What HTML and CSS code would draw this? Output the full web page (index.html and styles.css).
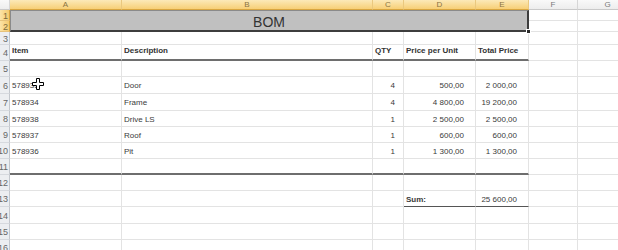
FILE: index.html
```html
<!DOCTYPE html>
<html lang="en">

<head>
  <meta charset="UTF-8">
  <meta name="viewport" content="width=device-width, initial-scale=1.0">
  <title>BOM</title>
  <link rel="stylesheet" href="styles.css">
</head>

<body>
  <main class="sheet">
    <!-- column headers -->
    <div class="col corner"></div>
    <div class="col sel">A</div>
    <div class="col sel">B</div>
    <div class="col sel">C</div>
    <div class="col sel">D</div>
    <div class="col sel">E</div>
    <div class="col">F</div>
    <div class="col">G</div>

    <!-- rows 1-2: merged title -->
    <div class="bom">BOM<span class="handle"></span></div>
    <div class="row sel">1</div><div></div><div></div>
    <div class="row sel">2</div><div></div><div></div>

    <div class="row">3</div><div></div><div></div><div></div><div></div><div></div><div></div><div></div>

    <div class="row">4</div>
    <div class="head">Item</div>
    <div class="head">Description</div>
    <div class="head">QTY</div>
    <div class="head">Price per Unit</div>
    <div class="head">Total Price</div>
    <div></div><div></div>

    <div class="row">5</div><div></div><div></div><div></div><div></div><div></div><div></div><div></div>

    <div class="row">6</div><div>578935</div><div>Door</div><div class="qty">4</div><div class="num">500,00</div><div class="num">2 000,00</div><div></div><div></div>
    <div class="row">7</div><div>578934</div><div>Frame</div><div class="qty">4</div><div class="num">4 800,00</div><div class="num">19 200,00</div><div></div><div></div>
    <div class="row">8</div><div>578938</div><div>Drive LS</div><div class="qty">1</div><div class="num">2 500,00</div><div class="num">2 500,00</div><div></div><div></div>
    <div class="row">9</div><div>578937</div><div>Roof</div><div class="qty">1</div><div class="num">600,00</div><div class="num">600,00</div><div></div><div></div>
    <div class="row">10</div><div>578936</div><div>Pit</div><div class="qty">1</div><div class="num">1 300,00</div><div class="num">1 300,00</div><div></div><div></div>

    <div class="row">11</div><div class="rule"></div><div class="rule"></div><div class="rule"></div><div class="rule"></div><div class="rule"></div><div></div><div></div>
    <div class="row">12</div><div></div><div></div><div></div><div></div><div></div><div></div><div></div>
    <div class="row">13</div><div></div><div></div><div></div><div class="sum label">Sum:</div><div class="sum num">25 600,00</div><div></div><div></div>
    <div class="row">14</div><div></div><div></div><div></div><div></div><div></div><div></div><div></div>
    <div class="row">15</div><div></div><div></div><div></div><div></div><div></div><div></div><div></div>
    <div class="row">16</div><div></div><div></div><div></div><div></div><div></div><div></div><div></div>

    <!-- mouse pointer -->
    <svg class="pointer" width="12" height="12" viewBox="0 0 12 12">
      <path d="M4.5 0.5h3v4h4v3h-4v4h-3v-4h-4v-3h4z" fill="#fff" stroke="#000" stroke-width="1"/>
    </svg>
  </main>
</body>

</html>
```

FILE: styles.css
```css
* {
  margin: 0;
  padding: 0;
  box-sizing: border-box;
}

body {
  font-family: "Liberation Sans", Arial, sans-serif;
  background: #fff;
  overflow: hidden;
}

.sheet {
  position: relative;
  display: grid;
  grid-template-columns: 10px 112px 251px 31px 72px 53px 49px 60px;
  grid-template-rows: 10px 11px 11px 13px 16px 16px 17px 17px 16px 16px 16px 16px 16px 16px 17px 16px 16px;
  width: 638px;
}

.sheet > div {
  display: flex;
  align-items: center;
  padding: 2px 2px 0;
  border-right: 1px solid #e3e3e3;
  border-bottom: 1px solid #e3e3e3;
  font-size: 8px;
  line-height: 10px;
  color: #3a3a3a;
  white-space: nowrap;
  overflow: hidden;
}

/* headers */
.sheet > .col {
  justify-content: center;
  padding: 0;
  font-size: 8px;
  color: #7a7a7a;
  background: linear-gradient(#f9f9f9, #ededed);
  border-right-color: #d6d6d6;
  border-bottom-color: #c9c9c9;
}

.sheet > .col.sel {
  color: #8a7443;
  background: linear-gradient(#fce9b8, #f7cf76);
  border-right-color: #eac87e;
  border-bottom-color: #d9a640;
}

.sheet > .row {
  justify-content: flex-end;
  padding: 1px 1px 0 0;
  font-size: 9px;
  color: #666;
  background: #eceef1;
  border-right-color: #c3c7cd;
  border-bottom-color: #d6d9de;
}

.sheet > .row.sel {
  color: #7c6a3e;
  background: linear-gradient(90deg, #fbe3a6, #f5cb70);
  border-right-color: #d9a640;
  border-bottom-color: #e6c27a;
}

/* title cell */
.sheet > .bom {
  grid-column: 2 / 7;
  grid-row: 2 / 4;
  position: relative;
  justify-content: center;
  padding: 2px 0 0;
  font-size: 14px;
  color: #333;
  background: #c0c0c0;
  border: 1px solid #8a8a8a;
  border-right: 2px solid #3d3d3d;
  border-bottom: 2px solid #3d3d3d;
  overflow: visible;
  z-index: 1;
}

.handle {
  position: absolute;
  right: -4px;
  bottom: -4px;
  width: 5px;
  height: 5px;
  background: #2b2b2b;
  border: 1px solid #fff;
}

/* table body */
.sheet > .head {
  padding: 0 2px 3px;
  font-weight: bold;
  color: #333;
  border-bottom: 2px solid #6e6e6e;
}

.sheet > .rule {
  border-bottom: 2px solid #6e6e6e;
}

.sheet > .num {
  justify-content: flex-end;
  padding-right: 11px;
}

.sheet > .qty {
  justify-content: flex-end;
  padding-right: 8px;
}

.sheet > .sum {
  border-bottom: 1px solid #555;
}

.sheet > .label {
  font-weight: bold;
}

.pointer {
  position: absolute;
  left: 32px;
  top: 78px;
}
```
